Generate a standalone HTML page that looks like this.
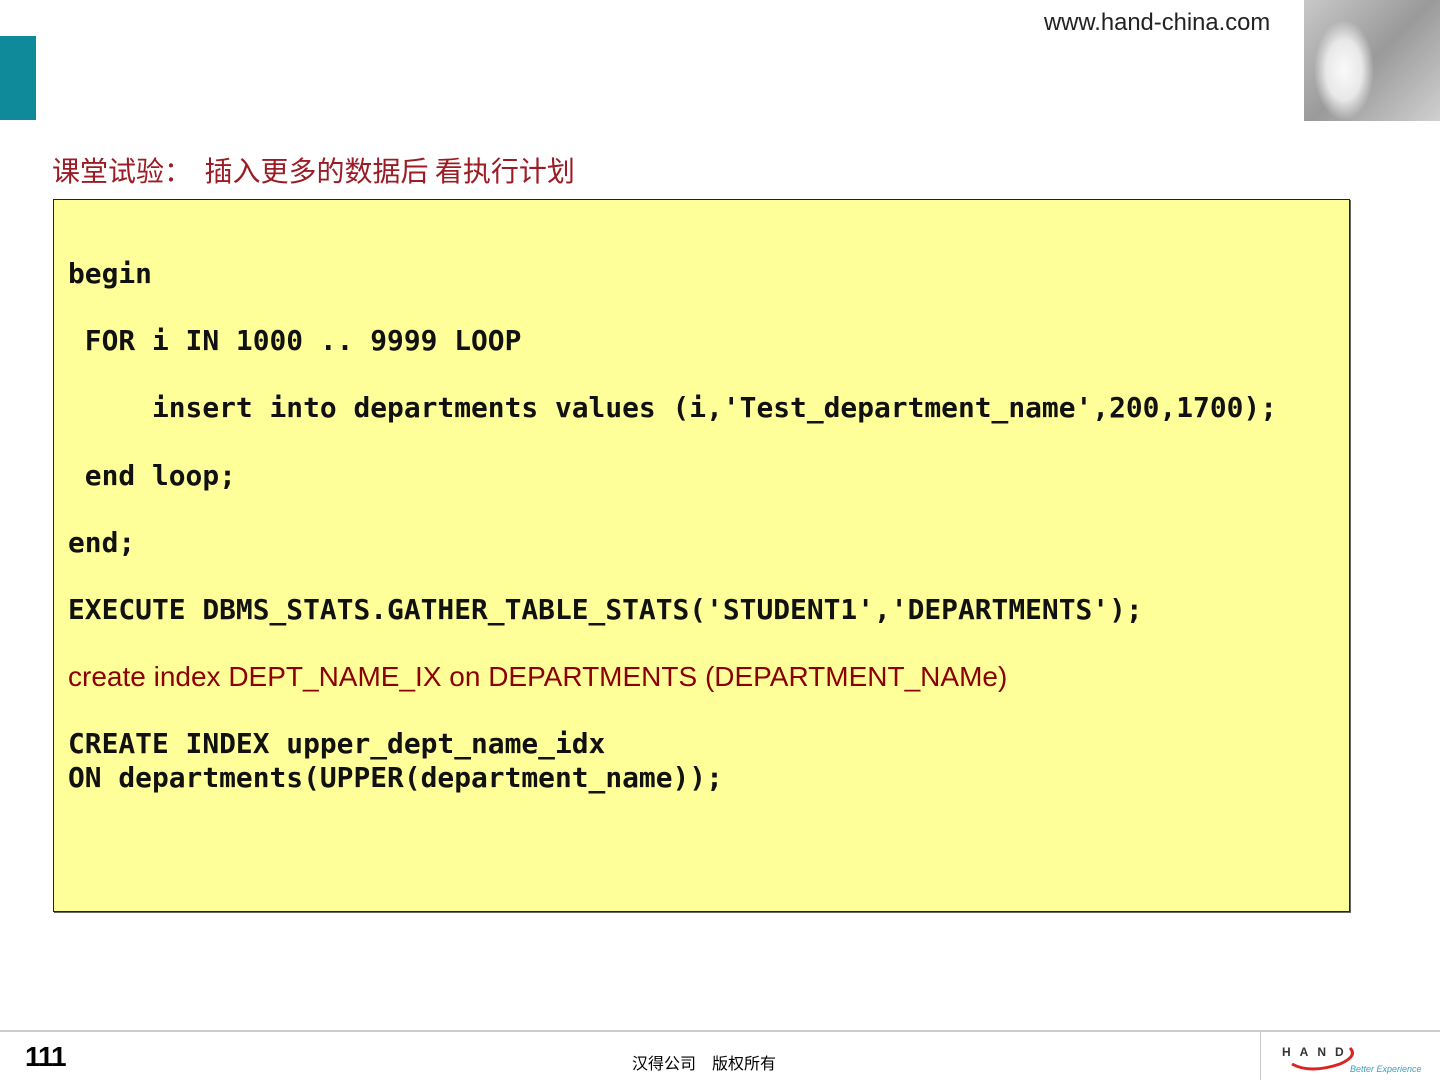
<!DOCTYPE html>
<html><head><meta charset="utf-8"><style>
body{margin:0;width:1440px;height:1080px;background:#fff;position:relative;overflow:hidden;font-family:"Liberation Sans","Noto Sans CJK SC",sans-serif}
.bar{position:absolute;left:0;top:36px;width:36px;height:84px;background:#0e8a9a}
.url{position:absolute;left:1044px;top:9px;font-size:23.8px;color:#222}
.img{position:absolute;left:1304px;top:0;width:136px;height:121px;background:radial-gradient(ellipse 30px 50px at 40px 70px,#fafafa 0%,#e8e8e8 60%,transparent 100%),linear-gradient(135deg,#c8c8c8,#9a9a9a 50%,#d0d0d0)}
.title{position:absolute;left:52px;top:150px;font-size:28px;color:#9b1c24;font-family:"Noto Sans CJK SC",sans-serif;white-space:pre}
.box{position:absolute;left:53px;top:199px;width:1295px;height:711px;background:#ffff99;border:1px solid #222;box-shadow:1px 1px 0 #666}
pre{position:absolute;left:68px;top:257px;margin:0;font-family:"DejaVu Sans Mono","Liberation Mono",monospace;font-weight:bold;font-size:27.9px;line-height:33.6px;color:#111}
.red{font-family:"Liberation Sans",sans-serif;font-weight:normal;color:#8b0000;font-size:28px}
.fl{position:absolute;left:0;top:1030px;width:1440px;height:2px;background:#ccc}
.num{position:absolute;left:25px;top:1041px;font-size:28px;font-weight:bold;letter-spacing:-1px}
.cp{position:absolute;left:632px;top:1050px;font-size:16px;font-family:"Noto Sans CJK SC",sans-serif}
.vl{position:absolute;left:1260px;top:1032px;width:1px;height:48px;background:#ccc}
</style></head><body>
<div class="bar"></div>
<div class="url">www.hand-china.com</div>
<div class="img"></div>
<div class="title">课堂试验：  插入更多的数据后 看执行计划</div>
<div class="box"></div>
<pre>begin

 FOR i IN 1000 .. 9999 LOOP

     insert into departments values (i,'Test_department_name',200,1700);

 end loop;

end;

EXECUTE DBMS_STATS.GATHER_TABLE_STATS('STUDENT1','DEPARTMENTS');

<span class="red">create index DEPT_NAME_IX on DEPARTMENTS (DEPARTMENT_NAMe)</span>

CREATE INDEX upper_dept_name_idx
ON departments(UPPER(department_name));</pre>
<div class="fl"></div>
<div class="num">111</div>
<div class="cp">汉得公司　版权所有</div>
<div class="vl"></div>
<svg style="position:absolute;left:1280px;top:1040px" width="160" height="40">
<path d="M12 24 Q30 34 60 24 Q78 16 70 8" fill="none" stroke="#d22" stroke-width="3"/>
<text x="2" y="16" font-family="Liberation Sans" font-size="12" font-weight="bold" letter-spacing="9" fill="#333">HAND</text>
<text x="70" y="32" font-family="Liberation Sans" font-size="9" font-style="italic" fill="#3aa0c0">Better Experience</text>
</svg>
</body></html>
